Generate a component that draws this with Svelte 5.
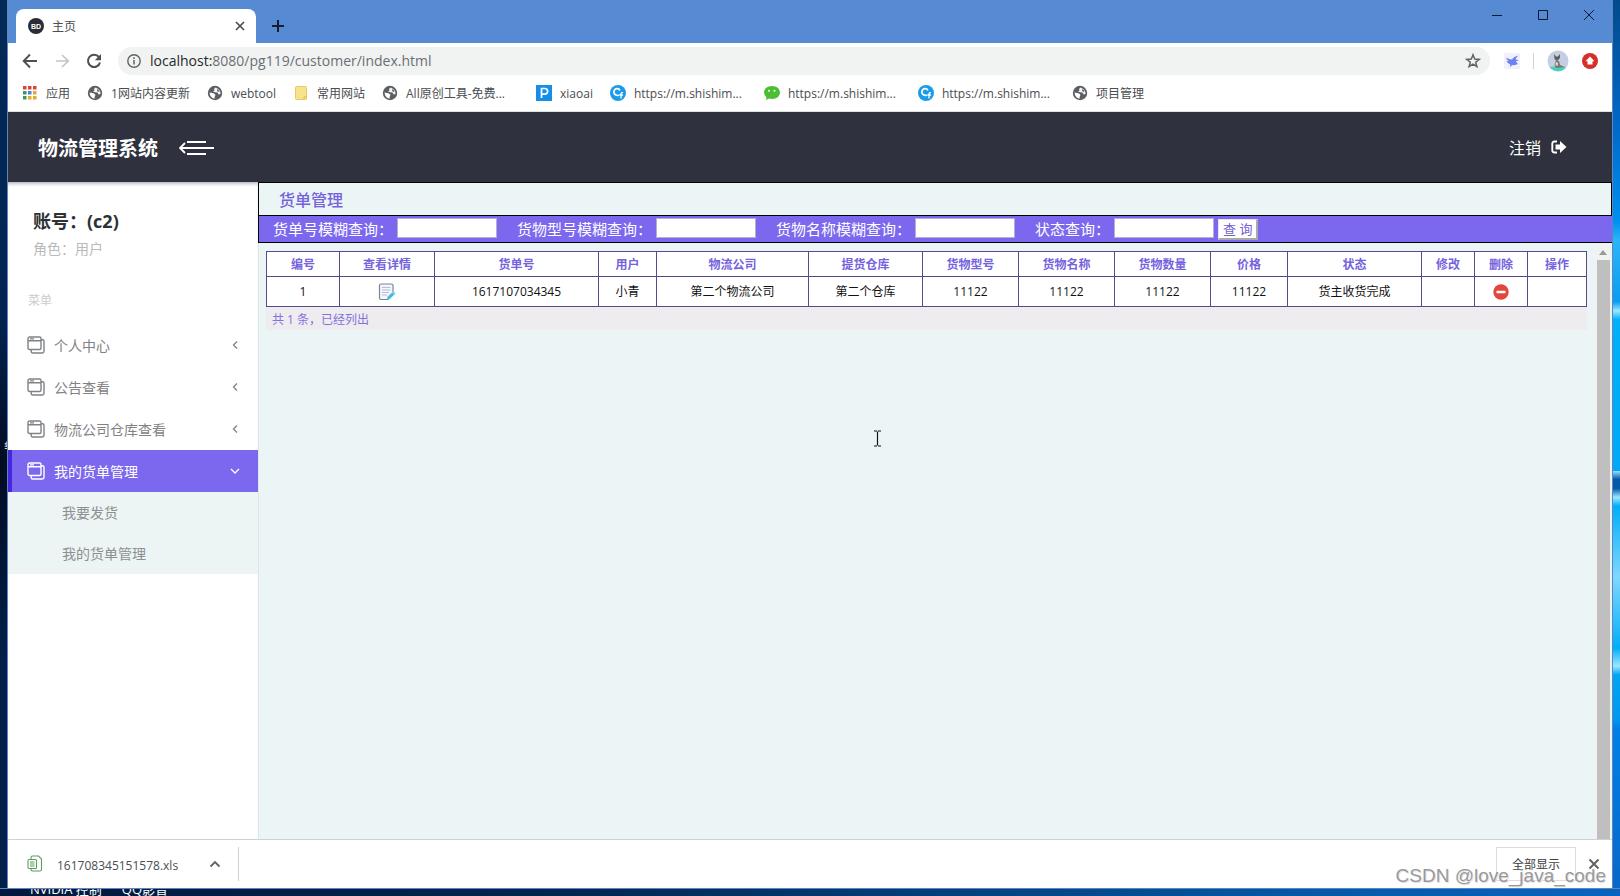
<script>
  const bookmarks = [
    { icon: 'apps', label: '应用' },
    { icon: 'globe', label: '1网站内容更新' },
    { icon: 'globe', label: 'webtool' },
    { icon: 'folder', label: '常用网站' },
    { icon: 'globe', label: 'All原创工具-免费...', wide: true },
    { icon: 'p', label: 'xiaoai' },
    { icon: 'cf', label: 'https://m.shishim...', wide: true },
    { icon: 'chat', label: 'https://m.shishim...', wide: true },
    { icon: 'cf', label: 'https://m.shishim...', wide: true },
    { icon: 'globe', label: '项目管理' }
  ];
  const appColors = ['#d9453b', '#d9453b', '#d9453b', '#3a9c58', '#4a86d8', '#e2ab2f', '#3a9c58', '#e2ab2f', '#e2ab2f'];
  const menu = ['个人中心', '公告查看', '物流公司仓库查看', '我的货单管理'];
  const active = 3;
  const submenu = ['我要发货', '我的货单管理'];
  const filters = ['货单号模糊查询：', '货物型号模糊查询：', '货物名称模糊查询：', '状态查询：'];
  const columns = [
    ['编号', 73], ['查看详情', 95], ['货单号', 164], ['用户', 58], ['物流公司', 152],
    ['提货仓库', 114], ['货物型号', 96], ['货物名称', 96], ['货物数量', 96], ['价格', 77],
    ['状态', 134], ['修改', 53], ['删除', 53], ['操作', 59]
  ];
  const total = columns.reduce((sum, c) => sum + c[1], 0);
  const row = ['1', 'view', '1617107034345', '小青', '第二个物流公司', '第二个仓库', '11122', '11122', '11122', '11122', '货主收货完成', '', 'delete', ''];
</script>

<div class="desktop">
  <div class="edge left"><span>纟</span></div>
  <div class="window">
    <div class="titlebar">
      <div class="tab">
        <svg width="16" height="16" viewBox="0 0 16 16"><circle cx="8" cy="8" r="8" fill="#2b2d36" /><text x="8" y="10.5" text-anchor="middle" font-size="7" font-weight="bold" font-family="Liberation Sans, sans-serif" fill="#fff">BD</text></svg>
        <span class="tab-name">主页</span>
        <button class="plain" aria-label="关闭标签页"><svg width="10" height="10" viewBox="0 0 10 10"><path d="M1 1L9 9M9 1L1 9" stroke="#45484c" stroke-width="1.6" /></svg></button>
      </div>
      <button class="plain newtab" aria-label="新标签页"><svg width="12" height="12" viewBox="0 0 12 12"><path d="M6 0V12M0 6H12" stroke="#15202e" stroke-width="2" /></svg></button>
      <div class="controls">
        <button class="plain" aria-label="最小化"><svg width="12" height="12" viewBox="0 0 12 12"><path d="M1 6.5H11" stroke="#0c1a30" /></svg></button>
        <button class="plain" aria-label="最大化"><svg width="12" height="12" viewBox="0 0 12 12"><path d="M1.5 1.5H10.5V10.5H1.5Z" fill="none" stroke="#0c1a30" /></svg></button>
        <button class="plain" aria-label="关闭"><svg width="12" height="12" viewBox="0 0 12 12"><path d="M1 1L11 11M11 1L1 11" stroke="#0c1a30" /></svg></button>
      </div>
    </div>

    <div class="toolbar">
      <button class="plain" aria-label="后退"><svg width="16" height="16" viewBox="0 0 16 16"><path d="M8 1.5L1.7 8L8 14.5M1.7 8H15" fill="none" stroke="#4d5054" stroke-width="1.9" /></svg></button>
      <button class="plain" aria-label="前进"><svg width="16" height="16" viewBox="0 0 16 16"><path d="M8 2L14.3 8L8 14M14.3 8H2" fill="none" stroke="#c2c4c6" stroke-width="1.7" /></svg></button>
      <button class="plain" aria-label="重新加载"><svg width="16" height="16" viewBox="0 0 16 16"><path d="M13 4.2A6.1 6.1 0 1 0 14 9.5" fill="none" stroke="#4d5054" stroke-width="2" /><path d="M15 1V7.2H8.8Z" fill="#4d5054" /></svg></button>
      <div class="address">
        <svg width="14" height="14" viewBox="0 0 14 14"><circle cx="7" cy="7" r="6.2" fill="none" stroke="#5f6368" stroke-width="1.4" /><path d="M7 6V10.6M7 3.3V4.9" stroke="#5f6368" stroke-width="1.5" /></svg>
        <span class="url"><b>localhost:</b>8080/pg119/customer/index.html</span>
        <button class="plain" aria-label="收藏"><svg width="16" height="16" viewBox="0 0 16 16"><path d="M8 1.8L9.7 6.100L14.2 6.4L10.700 9.2L11.900 13.700L8 11.2L4.100 13.700L5.300 9.2L1.800 6.4L6.300 6.100Z" fill="none" stroke="#5f6368" stroke-width="1.500" /></svg></button>
      </div>
      <div class="extras">
        <svg width="16" height="16" viewBox="0 0 16 16"><path d="M0 0H16V16H0Z" fill="#f1f1fc" /><path d="M2 4.500Q5 6.500 8 6.500Q9.500 3.500 14.500 2.500Q12 4.500 11.800 6.500L15 7.200L12 8.300Q12.500 10 14 11Q11 12.500 8.500 12L6 14L6.300 11.500Q3 10 2.500 7.500L5 8.200Q2.500 6.500 2 4.500Z" fill="#6b82f5" /></svg>
        <i class="split"></i>
        <svg width="22" height="22" viewBox="0 0 22 22"><circle cx="11" cy="11" r="10.500" fill="#c6cee3" /><path d="M2.500 17A10.500 10.500 0 0 0 19 17.500L13 16Z" fill="#45d1bd" /><path d="M7 4L9 6.500H11L13 4V8L10 11L7.500 9Z" fill="#58605b" /><path d="M9 10L12 11L13 15L18 17L9 18L7.500 15Z" fill="#77796a" /><path d="M9 12L11 13L10.500 16L8.500 15Z" fill="#e8e2cf" /></svg>
        <svg width="16" height="16" viewBox="0 0 16 16"><circle cx="8" cy="8" r="8" fill="#d42f28" /><path d="M8 3.500L12.500 8.300H10.500V11.500H5.500V8.300H3.500Z" fill="#fff" /></svg>
      </div>
    </div>

    <nav class="bookmarks" aria-label="书签">
      {#each bookmarks as b}
        <a href="#top" class:wide={b.wide}>
          {#if b.icon === 'apps'}
            <svg width="16" height="16" viewBox="0 0 16 16">{#each appColors as c, i}<rect x={1 + (i % 3) * 5} y={1 + Math.floor(i / 3) * 5} width="3.500" height="3.500" fill={c} />{/each}</svg>
          {:else if b.icon === 'globe'}
            <svg width="16" height="16" viewBox="0 0 16 16"><circle cx="8" cy="8" r="7.200" fill="#5b5e62" /><path d="M2.500 7.500L6.500 8.200L8.500 9.800L7.800 11.500L7.500 13.800Q3 13 2.500 7.500Z" fill="#fff" /><path d="M8.500 2.500L7 4L7.500 5.500L6 6.500L8 7.200L10.500 7.500L11.500 9.500L13.500 9Q14 4.500 8.500 2.500Z" fill="#f2f3f3" /><path d="M10.500 4L12.500 6L12 7L10 6Z" fill="#5b5e62" /></svg>
          {:else if b.icon === 'folder'}
            <svg width="16" height="16" viewBox="0 0 16 16"><rect x="2.500" y="1.500" width="11" height="13" rx="1" fill="#f8e28b" stroke="#e8c95c" /><path d="M11 14V12H13.500" fill="none" stroke="#d9b848" /></svg>
          {:else if b.icon === 'p'}
            <svg width="16" height="16" viewBox="0 0 16 16"><rect width="16" height="16" fill="#148ee9" /><path d="M5.500 13V3.500H8.800A2.800 2.800 0 0 1 8.800 9.100H5.500" fill="none" stroke="#fff" stroke-width="1.700" /></svg>
          {:else if b.icon === 'cf'}
            <svg width="16" height="16" viewBox="0 0 16 16"><circle cx="8" cy="8" r="8" fill="#1c9bea" /><path d="M9.800 5.500Q9.500 3.800 7.500 3.600A3.400 3.400 0 1 0 8.800 10" fill="none" stroke="#fff" stroke-width="1.800" /><path d="M13 7.800Q11 7.200 11 9V13.500M9.300 10H13" fill="none" stroke="#fff" stroke-width="1.300" /></svg>
          {:else}
            <svg width="16" height="16" viewBox="0 0 16 16"><path d="M8 1C12.500 1 16 3.800 16 7.500S12.500 14 8 14Q6.500 14 5.300 13.600L2 15L2.500 12.300Q0 10.500 0 7.500C0 3.800 3.500 1 8 1Z" fill="#4bbf34" /><circle cx="5" cy="5.800" r="1" fill="#fff" /><circle cx="10.500" cy="5.800" r="1" fill="#fff" /></svg>
          {/if}
          <span>{b.label}</span>
        </a>
      {/each}
    </nav>

    <header>
      <h1>物流管理系统</h1>
      <button class="plain" aria-label="收起菜单"><svg width="36" height="18" viewBox="0 0 36 18"><path d="M8 3H27M1 9H35M8 15H27M6 4L1 9L6 14" fill="none" stroke="#fff" stroke-width="1.800" /></svg></button>
      <a class="logout" href="#logout">注销
        <svg width="16" height="14" viewBox="0 0 16 14"><path d="M6 1.500H3.500Q1.300 1.500 1.300 3.700V10.300Q1.300 12.500 3.500 12.500H6" fill="none" stroke="#fff" stroke-width="1.900" /><path d="M4.500 4.500H9V1L15.500 7L9 13V9.500H4.500Z" fill="#fff" /></svg>
      </a>
    </header>

    <div class="body">
      <aside>
        <div class="account">
          <h2>账号：(c2)</h2>
          <p>角色：用户</p>
        </div>
        <div class="caption">菜单</div>
        <nav>
          {#each menu as name, i}
            <a href="#menu" class="item" class:active={i === active}>
              <svg width="18" height="18" viewBox="0 0 18 18" fill="none" stroke="currentColor" stroke-width="1.400"><rect x="1" y="1" width="13" height="12.500" rx="1.500" /><path d="M1 4.800H14M3 2.900H7M14 3.800H15.500Q17 3.800 17 5.300V15.300Q17 17 15.300 17H6Q4.200 17 4.200 15.200V13.500" /></svg>
              <span>{name}</span>
              <svg width="10" height="10" viewBox="0 0 10 10"><path d={i === active ? 'M1 3L5 7L9 3' : 'M7 1.500L3.500 5L7 8.500'} fill="none" stroke="currentColor" stroke-width="1.300" /></svg>
            </a>
          {/each}
          <div class="sub">
            {#each submenu as name}<a href="#sub">{name}</a>{/each}
          </div>
        </nav>
      </aside>

      <main>
        <h3>货单管理</h3>
        <form onsubmit={(e) => e.preventDefault()}>
          {#each filters as f}
            <label>{f}<input type="text" /></label>
          {/each}
          <button>查 询</button>
        </form>
        <div class="pane">
          <div class="content">
            <table>
              <colgroup>{#each columns as c}<col style="width: {(c[1] / total) * 100}%" />{/each}</colgroup>
              <thead><tr>{#each columns as c}<th>{c[0]}</th>{/each}</tr></thead>
              <tbody>
                <tr>
                  {#each row as cell}
                    <td>
                      {#if cell === 'view'}
                        <button class="plain" aria-label="查看详情"><svg width="18" height="18" viewBox="0 0 18 18"><path d="M1.500 2.500Q1.500 1 3 1H13.500Q15 1 15 2.500V11L10 16.500H3Q1.500 16.500 1.500 15Z" fill="#f3f5fb" stroke="#7a8894" stroke-width="1.200" /><path d="M4 4.500H12.500M4 7H12.500M4 9.500H11M4 12H9" stroke="#b3bfdc" /><path d="M9 16.500L9.800 13.500L15 8.800L17.200 10.800L12 15.800Z" fill="#43b9dd" /><path d="M14 9.700L15.500 8.300L17.700 10.300L16.200 11.700Z" fill="#87d7eb" /></svg></button>
                      {:else if cell === 'delete'}
                        <button class="plain" aria-label="删除"><svg width="16" height="16" viewBox="0 0 16 16"><circle cx="8" cy="8" r="7.700" fill="#e2473b" /><rect x="3.500" y="6.700" width="9" height="2.600" rx=".5" fill="#fff" /></svg></button>
                      {:else}{cell}{/if}
                    </td>
                  {/each}
                </tr>
              </tbody>
            </table>
            <p class="summary">共 1 条，已经列出</p>
            <svg class="cursor" width="9" height="17" viewBox="0 0 9 17"><path d="M1 1H4M5 1H8M4.500 1.500V15.500M1 16H4M5 16H8" stroke="#111" stroke-width="1.200" /></svg>
          </div>
          <div class="scroll"><svg width="8" height="5" viewBox="0 0 8 5"><path d="M4 0L8 5H0Z" fill="#9a9a9a" /></svg><i></i></div>
        </div>
      </main>
    </div>

    <footer>
      <button class="plain file">
        <svg width="16" height="18" viewBox="0 0 16 18" fill="none" stroke="#58a05c" stroke-width="1.100"><path d="M4 4V2.500Q4 1 5.500 1H11.500L14.500 4V14.500Q14.500 16 13 16H5.500Q4 16 4 14.500V14" /><rect x="1" y="4.500" width="8.500" height="9" rx="1" /><path d="M3 7H7.500M3 9H7.500M3 11H7.500" /></svg>
        <span>161708345151578.xls</span>
        <svg width="12" height="8" viewBox="0 0 12 8"><path d="M1.500 6.500L6 2L10.500 6.500" fill="none" stroke="#5f6368" stroke-width="1.800" /></svg>
      </button>
      <i class="bar"></i>
      <button class="all">全部显示</button>
      <button class="plain" aria-label="关闭下载栏"><svg width="12" height="12" viewBox="0 0 12 12"><path d="M1.500 1.500L10.500 10.500M10.500 1.500L1.500 10.500" stroke="#5f6368" stroke-width="2" /></svg></button>
    </footer>
  </div>
  <div class="edge right"></div>
  <div class="ground"><span>NVIDIA 控制</span><span>QQ影音</span></div>
  <div class="mark">CSDN @love_java_code</div>
</div>

<style>
  :global(body) { margin: 0; }
  .desktop {
    position: relative;
    display: grid;
    grid-template-columns: 8px minmax(0, 1fr) 8px;
    grid-template-rows: minmax(0, 1fr) 8px;
    height: 100vh;
    font-family: "Open Sans", "Noto Sans CJK SC", sans-serif;
    font-size: 12px;
    color: #4a4d51;
    background: #02204a;
  }
  .desktop * { box-sizing: border-box; }
  h1, h2, h3, p { margin: 0; }
  a { color: inherit; text-decoration: none; }
  svg { display: block; flex: none; }
  button, input { font: inherit; }
  .plain { padding: 0; border: 0; background: none; color: inherit; display: flex; align-items: center; }
  .edge { overflow: hidden; }
  .edge.left {
    display: flex;
    align-items: center;
    background: linear-gradient(#032a56, #032452 35%, #010c22 52%, #02204a 75%);
    color: #fff;
    border-right: 1px solid #5d86c0;
  }
  .edge.left span { margin-left: 4px; font-size: 10px; }
  .edge.right {
    border-left: 1px solid #5d86c0;
    background: linear-gradient(#024a8c 0%, #0068c8 14%, #0090f0 25%, #2cb4f8 27%, #0a9cf0 34%, #9be8ff 35%, #00b0f8 36%, #00a8f5 53%, #9be8ff 53%, #0358a8 54%, #0358a8 55%, #9be8ff 56%, #00aef8 57%, #7fd8fd 65%, #00aef8 73%, #9be8ff 75%, #00a4f2 76%, #0098ee 81%, #0080e6 82%, #0868c8 100%);
  }
  .ground {
    grid-column: 1 / -1;
    display: flex;
    align-items: flex-end;
    gap: 20px;
    padding-left: 30px;
    overflow: hidden;
    border-top: 1px solid #5d86c0;
    font-size: 13px;
    line-height: 13px;
    color: #fff;
    background: linear-gradient(90deg, #02183c, #02264f 35%, #0458a6 80%, #0864c0);
  }
  .window { display: flex; flex-direction: column; min-height: 0; background: #fff; }

  .titlebar { display: flex; height: 43px; flex: none; padding-left: 8px; background: #568bd3; }
  .tab { display: flex; align-items: center; width: 240px; margin-top: 9px; padding: 0 11px 0 12px; border-radius: 8px 8px 0 0; background: #fff; }
  .tab-name { flex: 1; margin-left: 8px; }
  .newtab { margin: 9px 0 0 16px; }
  .controls { display: flex; gap: 34px; margin-left: auto; padding: 9px 17px 0 0; align-items: flex-start; }

  .toolbar { display: flex; align-items: center; height: 36px; flex: none; gap: 16px; padding: 0 14px; }
  .address { display: flex; flex: 1; align-items: center; height: 28px; margin-right: -2px; padding: 0 9px; border-radius: 14px; background: #f0f3f2; }
  .url { flex: 1; margin-left: 9px; padding-bottom: 2px; font-size: 14px; color: #6b6e72; }
  .url b { font-weight: 400; color: #26282b; }
  .extras { display: flex; align-items: center; gap: 13px; }
  .split { width: 1px; height: 16px; background: #cfd2d6; }

  .bookmarks { display: flex; align-items: center; height: 33px; flex: none; gap: 17px; padding: 0 14px 4px; border-bottom: 1px solid #dfe1e3; white-space: nowrap; }
  .bookmarks a { display: flex; align-items: center; gap: 8px; }
  .bookmarks .wide { width: 137px; }

  header { display: flex; align-items: center; height: 70px; flex: none; padding: 2px 45px 0 30px; color: #fff; background: #2f323e; }
  h1 { margin-right: 21px; padding-top: 2px; font-size: 20px; line-height: 26px; }
  .logout { display: flex; align-items: center; gap: 10px; margin-left: auto; padding-bottom: 2px; font-size: 16px; }

  .body { display: flex; flex: 1; min-height: 0; }
  aside { width: 250px; flex: none; background: #fff; box-shadow: inset 0 4px 4px -3px #9a9da3; }
  .account { padding: 25px 25px 0; }
  h2 { font-size: 18px; line-height: 28px; color: #2e3134; }
  .account p { font-size: 14px; line-height: 28px; color: #b8babc; }
  .caption { padding: 27px 20px 0; line-height: 22px; color: #cbcdcf; }
  aside nav { padding-top: 12px; }
  .item { display: flex; align-items: center; height: 42px; padding: 0 18px 0 15px; border-left: 4px solid transparent; font-size: 14px; color: #7f8286; }
  .item span { flex: 1; margin-left: 9px; }
  .item.active { border-color: #4527dd; background: #7b68ee; color: #fff; }
  .sub { background: #ecf4f4; }
  .sub a { display: block; padding-left: 54px; font-size: 14px; line-height: 41px; color: #8c9093; }

  main { display: flex; flex: 1; flex-direction: column; min-width: 0; background: #ebf5f5; }
  h3 { padding: 3px 20px 0; border: 1px solid #000; font-size: 16px; font-weight: 500; line-height: 29px; color: #7562dd; }
  form { display: flex; align-items: center; height: 27px; flex: none; padding: 0 0 2px 14px; border: solid #000; border-width: 0 0 1px 1px; background: #7b68ee; color: #fff; }
  label { display: flex; align-items: center; gap: 4px; margin-right: 20px; font-size: 15px; white-space: nowrap; }
  label:last-of-type { margin-right: 4px; }
  input { width: 100px; height: 20px; padding: 0 2px; border: 1px solid #b4b0cc; background: #fff; }
  form button { height: 21px; margin-top: 2px; padding: 0 4px; border: 1px solid #e8e4f4; border-right: 2px solid #aaa; border-bottom: 2px solid #aaa; background: #fff; font-size: 13px; line-height: 16px; color: #7560d0; }
  .pane { display: flex; flex: 1; min-height: 0; border-left: 1px solid #dde6e8; }
  .content { position: relative; flex: 1; min-width: 0; padding: 8px 7px 0; }
  table { width: 100%; table-layout: fixed; border-collapse: collapse; background: #fff; }
  th, td { padding: 0; border: 1px solid #554a8c; text-align: center; line-height: 16px; }
  th { height: 25px; padding-top: 2px; color: #7562dd; }
  td { height: 30px; color: #111; }
  td .plain { display: inline-flex; vertical-align: middle; }
  .summary { height: 23px; padding-left: 6px; background: #eeecef; line-height: 26px; color: #8670dd; }
  .cursor { position: absolute; left: 614px; top: 187px; }
  .scroll { display: flex; flex-direction: column; align-items: center; width: 18px; flex: none; padding-top: 7px; background: #f0f3f4; }
  .scroll i { flex: 1; width: 13px; margin-top: 5px; background: #bfbfbf; }

  footer { display: flex; align-items: center; height: 49px; flex: none; padding-right: 12px; border-top: 1px solid #cfd2d3; background: #fff; }
  .file { width: 230px; padding: 0 17px 0 19px; }
  .file span { flex: 1; margin-left: 14px; padding-top: 2px; text-align: left; }
  .bar { width: 1px; height: 34px; background: #cfd2d3; }
  .all { width: 80px; height: 34px; margin: 0 12px 0 auto; border: 1px solid #e2d9df; background: #fff; color: #3c4043; }
  .mark { position: absolute; right: 14px; bottom: 9px; font-family: "Liberation Sans", sans-serif; font-size: 19px; line-height: 22px; color: #9a9a9a; text-shadow: 1px 1px 0 #e4e4e4; }
</style>
